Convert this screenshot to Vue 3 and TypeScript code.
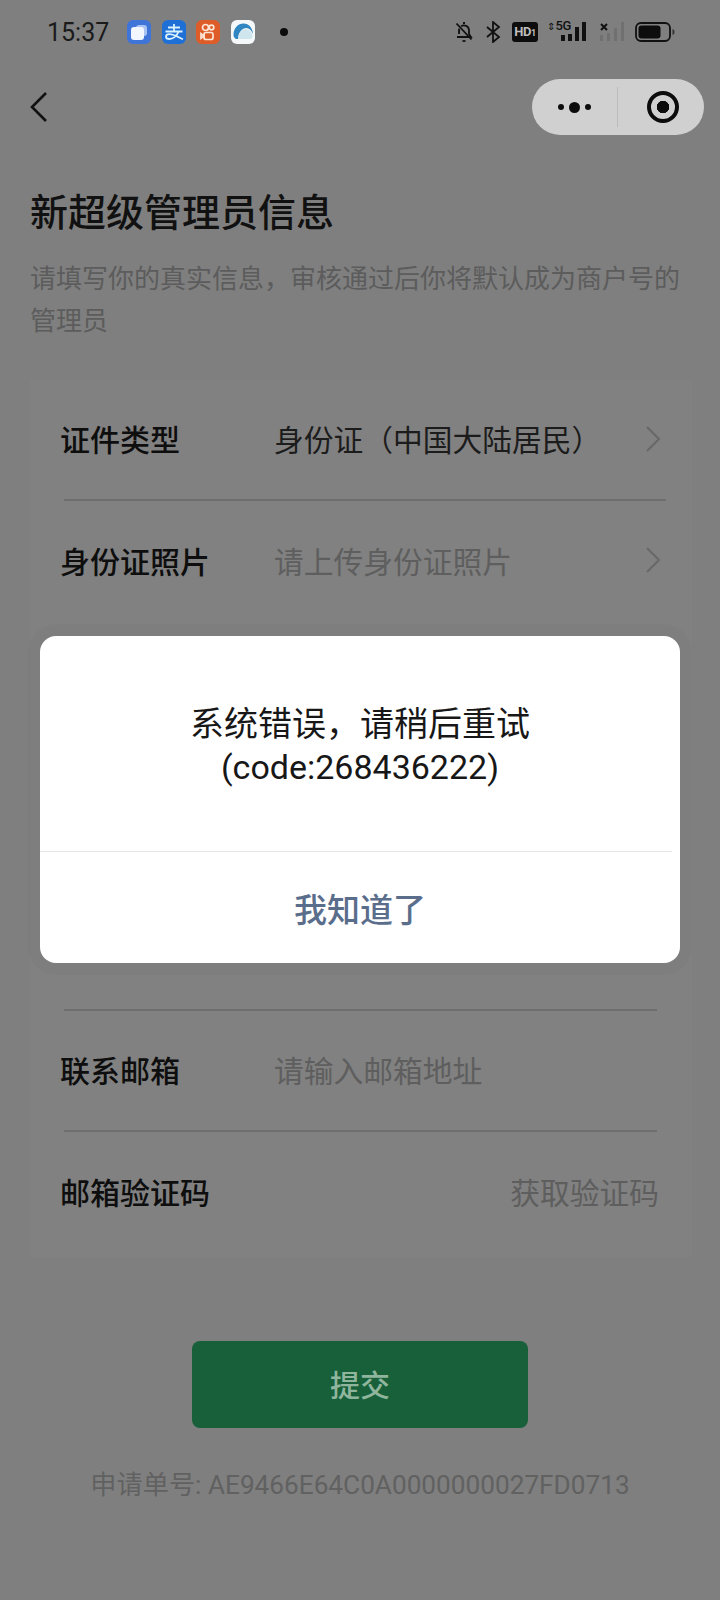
<template>
  <div class="page">
    <!-- Status bar -->
    <header class="status-bar">
      <span class="time">15:37</span>
      <div class="apps">
        <span class="app app--blue">
          <svg viewBox="0 0 24 24" width="24" height="24">
            <rect x="9" y="5" width="11" height="11" rx="3" fill="#a9c4f3" />
            <rect x="4" y="7" width="13" height="13" rx="3" fill="#f2f6fe" />
          </svg>
        </span>
        <span class="app app--alipay">
          <svg viewBox="0 0 24 24" width="24" height="24" fill="none" stroke="#d8f2ff" stroke-width="1.8">
            <path d="M6 7.500h12M3.500 11.500h17M12 4v7.500" />
            <path d="M16.500 11.500c-1.500 5-6 7.500-9 7.500-2.500 0-3.500-1-3.500-2.300 0-1.500 1.500-2.500 3.500-2.500 4 0 9 3 13.500 5" />
          </svg>
        </span>
        <span class="app app--orange">
          <svg viewBox="0 0 24 24" width="24" height="24" fill="none" stroke="#fde6d6" stroke-width="1.7">
            <circle cx="9.500" cy="7.500" r="3" />
            <circle cx="15.500" cy="7.500" r="2.300" />
            <rect x="8" y="12.500" width="9" height="7" rx="2" />
            <path d="M8 16l-3-2.300v4.600z" />
          </svg>
        </span>
        <span class="app app--white">
          <svg viewBox="0 0 24 24" width="24" height="24">
            <path d="M2.500 15C2.500 8 7 3.500 12.500 3.500S21.500 8 22 14c-1.500-4-4-6-6.500-6C11 8 7.500 12 7 19H5c-1.500-1-2.500-2.500-2.500-4z" fill="#2f86c0" />
            <path d="M7 19c.5-6 4-10 8-10 3 0 5.500 3 6.500 6v1c0 2-1 3-3 3z" fill="#cfe6ef" />
          </svg>
        </span>
      </div>
      <span class="dot" />
      <div class="sys-icons">
        <!-- bell off -->
        <svg viewBox="0 0 18 22" width="18" height="22" fill="none" stroke="#111" stroke-width="1.8">
          <path d="M2 16h14l-2-3V9a5 5 0 0 0-8-3.600M4.200 7.800C4 8.400 4 9 4 9v4z" />
          <path d="M8 2h2" />
          <path d="M1.500 2.500l15 16" />
          <path d="M7.500 20h3" />
        </svg>
        <!-- bluetooth -->
        <svg viewBox="0 0 16 22" width="16" height="22" fill="none" stroke="#111" stroke-width="1.800">
          <path d="M2 6l12 10-6 5V1l6 5L2 16" />
        </svg>
        <span class="hd">HD<small>1</small></span>
        <!-- 5G signal -->
        <div class="signal">
          <span class="net"><i>⇕</i>5G</span>
          <svg viewBox="0 0 28 22" width="28" height="22" fill="#111">
            <rect x="0" y="14" width="4" height="6" />
            <rect x="7" y="13" width="4" height="7" />
            <rect x="14" y="6" width="4" height="14" />
            <rect x="21" y="1" width="4" height="19" />
          </svg>
        </div>
        <!-- no service -->
        <svg class="no-sim" viewBox="0 0 28 22" width="28" height="22">
          <path d="M2 3l6 6M8 3l-6 6" stroke="#111" stroke-width="2" fill="none" />
          <g fill="#707070">
            <rect x="1" y="14" width="3" height="6" />
            <rect x="8" y="12" width="3" height="8" />
            <rect x="15" y="7" width="3" height="13" />
            <rect x="22" y="1" width="3" height="19" />
          </g>
        </svg>
        <!-- battery -->
        <svg viewBox="0 0 40 22" width="40" height="22">
          <rect x="1" y="2" width="34" height="18" rx="5" fill="none" stroke="#111" stroke-width="1.800" />
          <rect x="3.500" y="4.500" width="22" height="13" rx="3" fill="#0d0d0d" />
          <path d="M37.500 8c1.500.5 2 1.500 2 3s-.5 2.500-2 3z" fill="#333" />
        </svg>
      </div>
    </header>

    <!-- Nav -->
    <nav class="nav">
      <svg class="back" viewBox="0 0 20 32" width="20" height="32" fill="none" stroke="#111" stroke-width="2.600">
        <path d="M17 2L3 16l14 14" />
      </svg>
      <div class="capsule">
        <div class="capsule-more">
          <i class="small" />
          <i class="big" />
          <i class="small" />
        </div>
        <span class="capsule-line" />
        <div class="capsule-close">
          <span class="ring" />
        </div>
      </div>
    </nav>

    <main class="content">
      <h1>新超级管理员信息</h1>
      <p class="desc">请填写你的真实信息，审核通过后你将默认成为商户号的管理员</p>

      <section class="card">
        <div class="row row--wide">
          <span class="label">证件类型</span>
          <span class="value">身份证（中国大陆居民）</span>
          <svg class="chevron" viewBox="0 0 16 28" width="16" height="28" fill="none" stroke="#686868" stroke-width="2">
            <path d="M2 2l12 12L2 26" />
          </svg>
        </div>
        <div class="row row--open">
          <span class="label">身份证照片</span>
          <span class="value hint">请上传身份证照片</span>
          <svg class="chevron" viewBox="0 0 16 28" width="16" height="28" fill="none" stroke="#686868" stroke-width="2">
            <path d="M2 2l12 12L2 26" />
          </svg>
        </div>
        <!-- rows behind the dialog -->
        <div class="covered" />
        <div class="row">
          <span class="label">联系邮箱</span>
          <span class="value hint">请输入邮箱地址</span>
        </div>
        <div class="row row--open">
          <span class="label">邮箱验证码</span>
          <span class="code-btn">获取验证码</span>
        </div>
      </section>

      <button class="submit" type="button">提交</button>
      <p class="order">申请单号: {{ orderNo }}</p>
    </main>

    <!-- Dialog -->
    <div class="dialog">
      <div class="dialog-msg">
        <span>系统错误，请稍后重试</span>
        <span>(code:{{ errorCode }})</span>
      </div>
      <div class="dialog-btn">我知道了</div>
    </div>
  </div>
</template>

<script setup lang="ts">
const orderNo = 'AE9466E64C0A0000000027FD0713'
const errorCode = 268436222
</script>

<style>
html,
body {
  background: #7f7f7f;
}
</style>

<style scoped>
.page {
  position: relative;
  width: 720px;
  height: 1600px;
  overflow: hidden;
  background: #7f7f7f;
  color: #111;
  font-family: 'Roboto', 'Noto Sans CJK SC', sans-serif;
}

/* ── Status bar ── */
.status-bar {
  display: flex;
  align-items: center;
  height: 64px;
  padding-left: 47px;
  box-sizing: border-box;
}

.time {
  width: 80px;
  font-size: 25px;
  color: #1a1a1a;
}

.apps {
  display: flex;
  gap: 10.5px;
}

.app {
  width: 24px;
  height: 24px;
  border-radius: 6px;
  display: grid;
  place-items: center;
  overflow: hidden;
}

.app--blue {
  background: #3f74d8;
}

.app--alipay {
  background: #1e6fd6;
}

.app--orange {
  background: #dd5c28;
}

.app--white {
  background: #f4f8f9;
}

.dot {
  width: 8px;
  height: 8px;
  margin-left: 25px;
  border-radius: 50%;
  background: #0c0c0c;
}

.sys-icons {
  display: flex;
  align-items: center;
  gap: 8px;
  margin-left: 167.5px;
}

.sys-icons > svg:nth-child(2) {
  margin-left: 4px;
}

.hd {
  width: 26px;
  height: 20px;
  margin-left: 3px;
  border-radius: 3px;
  background: #0d0d0d;
  color: #bdbdbd;
  font-size: 13px;
  font-weight: 700;
  line-height: 20px;
  text-align: center;
  letter-spacing: -0.5px;
}

.hd small {
  font-size: 9px;
}

.signal {
  position: relative;
  width: 40px;
  height: 22px;
  margin-left: 1px;
  display: flex;
  justify-content: flex-end;
}

.net {
  position: absolute;
  left: 0;
  top: -3px;
  font-size: 13px;
  font-weight: 500;
  color: #111;
  letter-spacing: -0.5px;
}

.net i {
  font-style: normal;
  font-size: 10px;
  margin-right: 1px;
}

.signal svg {
  margin-right: -2px;
}

.no-sim {
  margin-left: 4px;
}

/* ── Nav ── */
.nav {
  display: flex;
  align-items: center;
  justify-content: space-between;
  height: 86px;
  padding: 0 16px 0 29px;
}

.capsule {
  width: 172px;
  height: 56px;
  border-radius: 28px;
  background: #d0d0d0;
  display: flex;
  align-items: center;
}

.capsule-more {
  width: 85px;
  display: flex;
  align-items: center;
  justify-content: center;
  gap: 5px;
}

.capsule-more i {
  border-radius: 50%;
  background: #0c0c0c;
}

.small {
  width: 6px;
  height: 6px;
}

.big {
  width: 11px;
  height: 11px;
}

.capsule-line {
  width: 1px;
  height: 40px;
  background: #bcbcbc;
}

.capsule-close {
  flex: 1;
  padding-left: 3px;
  display: grid;
  place-items: center;
}

.ring {
  width: 32px;
  height: 32px;
  border: 4px solid #0c0c0c;
  border-radius: 50%;
  box-sizing: border-box;
  background: radial-gradient(circle, #0c0c0c 0 6px, transparent 6.5px);
}

/* ── Content ── */
.content {
  padding: 38px 0 0 30px;
}

h1 {
  margin: 0;
  font-size: 38px;
  font-weight: 500;
  line-height: 50px;
  color: #111;
}

.desc {
  width: 660px;
  margin: 20px 0 0;
  font-size: 26px;
  line-height: 42px;
  color: #5c5c5c;
}

.card {
  width: 662px;
  margin-top: 38px;
  padding-bottom: 4px;
  background: #818181;
}

.row {
  display: flex;
  align-items: center;
  height: 121px;
  margin: 0 35px 0 34px;
  padding-bottom: 4px;
  box-sizing: border-box;
  border-bottom: 2px solid #6e6e6e;
  position: relative;
}

.row--wide {
  margin-right: 26px;
}

.row--open {
  border-bottom: 0;
}

.label {
  width: 214px;
  margin-left: -4px;
  font-size: 30px;
  font-weight: 500;
  color: #0e0e0e;
}

.value {
  flex: 1;
  font-size: 29.75px;
  color: #1c1c1c;
}

.hint {
  color: #5e5e5e;
}

.chevron {
  position: absolute;
  right: -4px;
  top: 45px;
}

.row--wide .chevron {
  right: 5px;
}

.covered {
  height: 387px;
  border-bottom: 2px solid #6e6e6e;
  margin: 0 35px 0 34px;
}

.code-btn {
  margin: 0 -2px 0 auto;
  font-size: 29.75px;
  color: #5e5e5e;
}

.submit {
  display: block;
  width: 336px;
  height: 87px;
  margin: 84px 0 0 162px;
  padding: 0 0 4px;
  border: 0;
  border-radius: 8px;
  background: #17603a;
  color: #8fb59c;
  font-family: inherit;
  font-size: 30px;
  font-weight: 500;
}

.order {
  width: 660px;
  margin: 39px 0 0;
  font-size: 26.2px;
  line-height: 36px;
  text-align: center;
  color: #616161;
}

/* ── Dialog ── */
.dialog {
  position: absolute;
  left: 40px;
  top: 636px;
  width: 640px;
  height: 327px;
  border-radius: 16px;
  background: #fff;
  box-shadow: 0 0 0 12px rgba(0, 0, 0, 0.015);
  display: flex;
  flex-direction: column;
}

.dialog-msg {
  height: 216px;
  width: 632px;
  box-sizing: border-box;
  border-bottom: 1px solid #e6e6e6;
  display: flex;
  flex-direction: column;
  align-items: center;
  justify-content: center;
  font-size: 34px;
  line-height: 43px;
  color: #171717;
  padding: 4px 0 0 8px;
}

.dialog-btn {
  flex: 1;
  display: grid;
  place-items: center;
  font-size: 33px;
  font-weight: 500;
  color: #5a6e8c;
}
</style>
